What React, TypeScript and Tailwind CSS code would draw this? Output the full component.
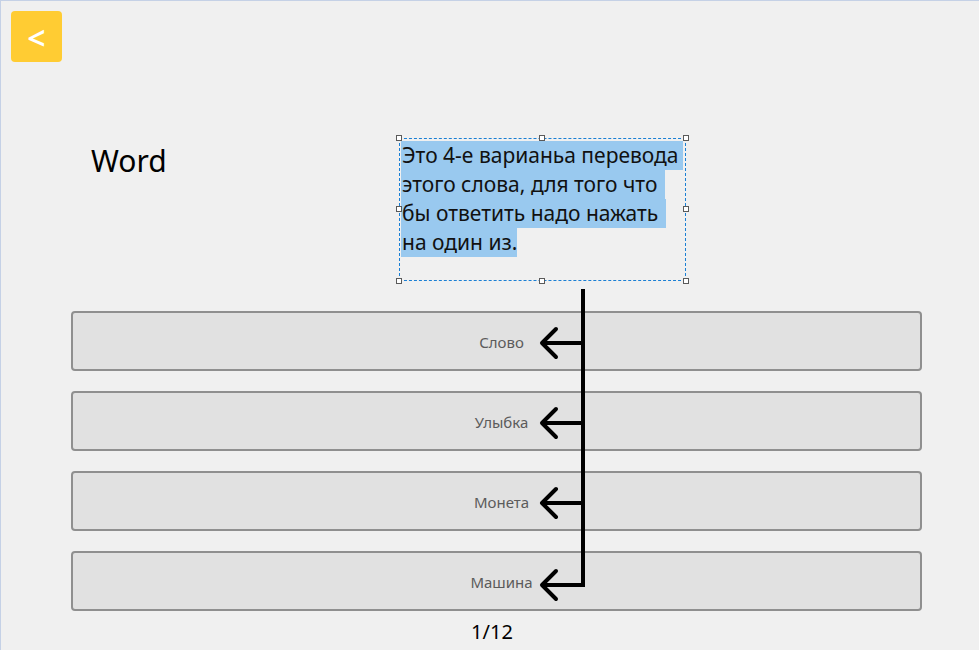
import React from "react";

const font = { fontFamily: '"Noto Sans", "Open Sans", sans-serif' };

function Handle({ cls }: { cls: string }) {
  return <div className={`absolute w-[6px] h-[6px] border border-[#5a5a5a] bg-white ${cls}`} />;
}

export default function App() {
  const answers = ["Слово", "Улыбка", "Монета", "Машина"];
  const textLines = [
    { t: "Это 4-е варианьа перевода", pr: "pr-[4px]" },
    { t: "этого слова, для того что", pr: "pr-[8px]" },
    { t: "бы ответить надо нажать", pr: "pr-[8px]" },
    { t: "на один из.", pr: "pr-0" },
  ];
  return (
    <div
      className="relative w-[979px] h-[650px] bg-[#f0f0f0] shadow-[inset_1px_1px_0_#c5d1e6] flex flex-col overflow-hidden"
      style={font}
    >
      <div className="pt-[11px] pl-[11px]">
        <button className="w-[51px] h-[51px] rounded-[4px] bg-[#ffcc33] text-white text-[32px] font-semibold leading-none flex items-center justify-center pt-[2px]">
          &lt;
        </button>
      </div>

      <div className="flex items-start mt-[76px] h-[143px]">
        <div className="ml-[91px] mt-[8px] text-[30px] leading-[30px] text-black w-[308px]">Word</div>
        <div className="relative w-[287px] h-[143px] border border-dashed border-[#1a7fd4]">
          <div className="pt-[2px] pl-[1px] text-[21px] leading-[29px] text-[#111]">
            {textLines.map((l) => (
              <div key={l.t}>
                <span className={`inline-block bg-[#99c9ef] pl-[1px] whitespace-pre ${l.pr}`}>{l.t}</span>
              </div>
            ))}
          </div>
          <Handle cls="-left-[4px] -top-[4px]" />
          <Handle cls="left-[139px] -top-[4px]" />
          <Handle cls="-right-[4px] -top-[4px]" />
          <Handle cls="-left-[4px] top-[67px]" />
          <Handle cls="-right-[4px] top-[67px]" />
          <Handle cls="-left-[4px] -bottom-[4px]" />
          <Handle cls="left-[139px] -bottom-[4px]" />
          <Handle cls="-right-[4px] -bottom-[4px]" />
        </div>
      </div>

      <div className="flex flex-col gap-[20px] mt-[30px] ml-[71px] w-[851px]">
        {answers.map((a) => (
          <div
            key={a}
            className="h-[60px] rounded-[4px] border-2 border-[#8f8f8f] bg-[#e1e1e1] flex items-center justify-center pl-[10px] pt-[3px] text-[15px] text-[#5b5b5b]"
          >
            {a}
          </div>
        ))}
      </div>

      <div className="mt-[7px] text-center pl-[5px] text-[20px] leading-[28px] text-black">1/12</div>

      <svg
        className="absolute left-0 top-0 pointer-events-none"
        width="979"
        height="650"
        viewBox="0 0 979 650"
      >
        <path d="M583 289 V585 H543" fill="none" stroke="#000" strokeWidth="4" />
        {[343, 423, 503].map((y) => (
          <path key={y} d={`M583 ${y} H543`} fill="none" stroke="#000" strokeWidth="4" />
        ))}
        {[343, 423, 503, 585].map((y) => (
          <path
            key={"c" + y}
            d={`M556 ${y - 14} L542 ${y} L556 ${y + 14}`}
            fill="none"
            stroke="#000"
            strokeWidth="4"
            strokeLinecap="round"
            strokeLinejoin="round"
          />
        ))}
      </svg>
    </div>
  );
}
